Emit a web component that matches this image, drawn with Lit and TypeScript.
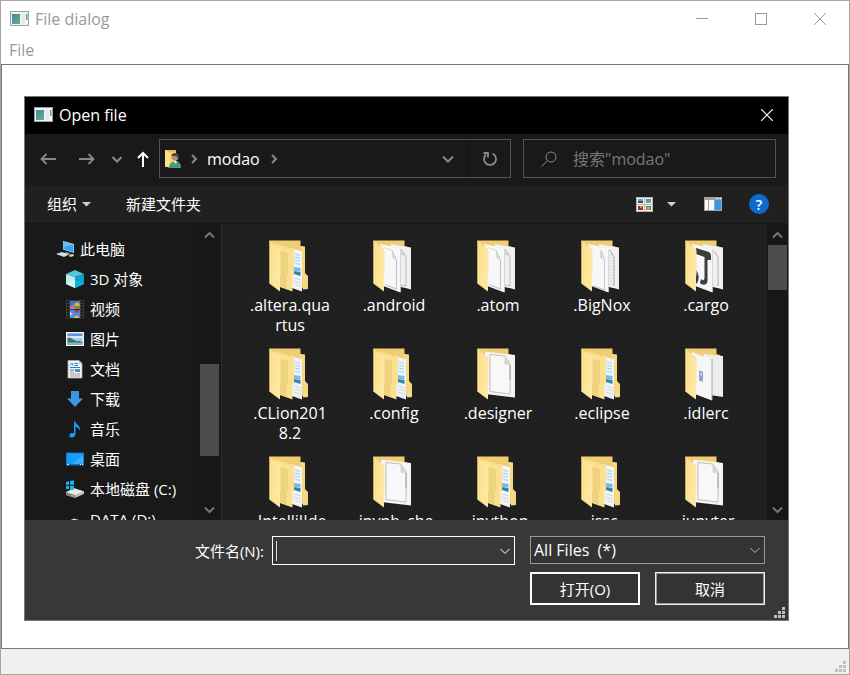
import { LitElement, html, svg, css } from "lit";
import { customElement } from "lit/decorators.js";

const appIcon = html`<svg class="app-icon" width="19" height="16" viewBox="0 0 19 16" aria-hidden="true">
  <defs>
    <linearGradient id="g" x1="0" y1="0" x2="0.6" y2="1">
      <stop offset="0" stop-color="#4a80a8" /><stop offset="1" stop-color="#56b184" />
    </linearGradient>
  </defs>
  <rect x="0.5" y="0.5" width="18" height="14" fill="#f4f4f4" stroke="#9a9fa3" />
  <rect x="2" y="3" width="8" height="10" fill="url(#g)" />
  <rect x="11" y="3" width="4" height="10" fill="#e8e8e8" />
  <rect x="16" y="3" width="1.4" height="6" fill="url(#g)" />
</svg>`;

const chevron = (cls: string) => html`<svg class="chev ${cls}" width="10" height="10" viewBox="0 0 10 10" aria-hidden="true">
  <path d="M0.500 3 L5 7.500 L9.500 3" fill="none" stroke="currentColor" />
</svg>`;

const chevronRight = html`<svg class="chev" width="10" height="10" viewBox="0 0 10 10" aria-hidden="true">
  <path d="M3 1L7 5L3 9" fill="none" stroke="currentColor" />
</svg>`;

const caretDown = html`<svg width="10" height="5" viewBox="0 0 10 5" aria-hidden="true"><path d="M0 0H9L4.5 4.5Z" fill="#d0d0d0" /></svg>`;

const grip = html`<svg class="grip" width="12" height="12" viewBox="0 0 12 12" aria-hidden="true">
  <path fill="currentColor" d="M8 0h3v3h-3zM4 4h3v3h-3zM8 4h3v3h-3zM0 8h3v3h-3zM4 8h3v3h-3zM8 8h3v3h-3z" />
</svg>`;

const placeIcons: Record<string, unknown> = {
  pc: svg`<path d="M7 1 L18 4 V13 L7 9.5Z" fill="#bfe3fb"/><path d="M7.5 2 L17.5 4.8 V12.2 L7.5 9Z" fill="#35a4f4"/><path d="M7.5 2 L17.5 4.8 L7.5 7Z" fill="#63bdf8"/>
    <path d="M10 12 L15 13.5 L11 15 L8 13.5Z" fill="#8d9499"/><path d="M0 14 L6 12 L13 14.6 L8 17Z" fill="#d9dde0"/><path d="M13 15 L17 14 L18 16 L14 17Z" fill="#d9dde0"/>`,
  cube: svg`<path d="M0 4 L9 0 L18 4 L9 7Z" fill="#50c8dc"/><path d="M0 4 L9 7 V18 L0 14Z" fill="#b9edf1"/><path d="M18 4 L9 7 V18 L18 14Z" fill="#12a0d0"/><path d="M0 14 L9 10 V18Z" fill="#d9f7f5"/><path d="M9 18 V10 L18 14Z" fill="#0fb5d8"/>`,
  video: svg`<rect width="18" height="18.500" fill="#3a3a3a"/><path d="M2 1V18M16 1V18" stroke="#111" stroke-width="2" stroke-dasharray="1.500 1.500"/>
    <rect x="4" y="1" width="10" height="8" fill="#4377cc"/><rect x="4" y="10" width="10" height="8" fill="#4f8be0"/>
    <circle cx="11" cy="5" r="2.600" fill="#e0b32c"/><path d="M4 7 L7 5 L9 8 V9 H4Z" fill="#e86a9e"/><rect x="9" y="6" width="5" height="2.500" fill="#5f9c35"/>
    <path d="M8 10H14L11 13Z" fill="#c32c28"/><path d="M8 18C8 15 13 15 13 18Z" fill="#e8c437"/><path d="M4 12L7 14L4 16Z" fill="#b9d7f7"/>`,
  picture: svg`<rect x="0" y="2" width="18" height="14" fill="#f5f5f5"/><rect x="1.500" y="3.500" width="15" height="11" fill="#9cc7ee"/><path d="M1.500 3.500H16.500V6H1.500Z" fill="#5d96d8"/><path d="M1.500 6H16.500V8L9 8.500L1.500 7Z" fill="#d7e9f7"/><path d="M1.500 8C6 7 8 12 13 11L16.500 12V14.500H1.500Z" fill="#3f7364"/><path d="M1.500 12.500H16.500V14.500H1.500Z" fill="#86b6cf"/>`,
  doc: svg`<path d="M2 0.500H13L16 3.500V18H2Z" fill="#f4f4f4" stroke="#a8a8a8" stroke-width="0.800"/><path d="M13 0.500V3.500H16Z" fill="#b9b9b9"/><path d="M4 5.500L6 3L7 5.500M8.500 3.500H12M8.500 5.500H12" stroke="#2484d0" fill="none"/><path d="M4 7.500H14M4 10H8" stroke="#2484d0"/><rect x="9" y="9" width="5" height="3" fill="#4e93b6"/><path d="M4 12H8M4 14H14M4 16H14" stroke="#9a9a9a"/>`,
  download: svg`<path d="M5 1H13V8.500H17L9 17L1 8.500H5Z" fill="#3b96e6"/>`,
  music: svg`<path d="M8 0C9 4 15 5 14 11C13 8 11 7 9.500 7V14C9.500 16.500 7 18 5 17.500C2.500 17 3 13.500 6 13C7 12.800 7.500 13 8 13.300Z" fill="#139df5"/>`,
  desktop: svg`<rect x="0" y="2.500" width="18" height="13" fill="#0a6fbe"/><rect x="0.800" y="3.300" width="16.400" height="10.500" fill="#149cf8"/><path d="M6 13.800L17.200 5V13.800Z" fill="#3bb0fb"/><path d="M1 14.600H3M14 14.600H15M16 14.600H17" stroke="#e7f4ff" stroke-width="1"/>`,
  disk: svg`<path d="M0 12L8 8L18 11.500V14L9 18L0 15Z" fill="#b9bcbe"/><path d="M1 12L8 8.500L18 11.500L9 15Z" fill="#e6e8e9"/><path d="M0 12.500L9 15.300V18L0 15Z" fill="#7d8183"/><path d="M5 15.500L7.500 16.300" stroke="#73e25a"/><path d="M0 3L4 2.200V5.800H0ZM5 2L9 1.200V5.800H5ZM0 6.800H4V10.300L0 9.600ZM5 6.800H9V11L5 10.400Z" fill="#11b7ee" transform="translate(-1 -1)"/>`,
  drive: svg`<path d="M0 12L8 8.500L18 11.500V14L9 18L0 15Z" fill="#d8dadb"/>`,
};

const places: [string, string, boolean][] = [
  ["pc", "此电脑", true],
  ["cube", "3D 对象", false],
  ["video", "视频", false],
  ["picture", "图片", false],
  ["doc", "文档", false],
  ["download", "下载", false],
  ["music", "音乐", false],
  ["desktop", "桌面", false],
  ["disk", "本地磁盘 (C:)", false],
  ["drive", "DATA (D:)", false],
];

type Kind = "media" | "pages" | "lined" | "font" | "single" | "image";

const folders: { lines: string[]; kind: Kind }[] = [
  { lines: [".altera.qua", "rtus"], kind: "media" },
  { lines: [".android"], kind: "pages" },
  { lines: [".atom"], kind: "pages" },
  { lines: [".BigNox"], kind: "lined" },
  { lines: [".cargo"], kind: "font" },
  { lines: [".CLion201", "8.2"], kind: "media" },
  { lines: [".config"], kind: "media" },
  { lines: [".designer"], kind: "single" },
  { lines: [".eclipse"], kind: "media" },
  { lines: [".idlerc"], kind: "image" },
  { lines: [".IntelliJIde", "a2018.2"], kind: "media" },
  { lines: [".ipynb_che", "ckpoints"], kind: "single" },
  { lines: [".ipython"], kind: "media" },
  { lines: [".jssc"], kind: "media" },
  { lines: [".jupyter"], kind: "single" },
];

const backPages = svg`<path d="M19 4L39 7.500V49.500L19 44Z" fill="#eff0f1"/>`;
const frontPage = svg`<path d="M8.500 4L28.500 8.500V52.500L8.500 45Z" fill="#f6f7f8"/><path d="M28.500 9V52" stroke="#c9cbcd" stroke-width="0.700"/>`;

const contents: Record<Kind, unknown> = {
  media: svg`<path d="M32 6L37 6.500V33L40 36V49L35 49.500Z" fill="#f6d982"/>
    <path d="M23 8L34 11.500V51.500L24 48Z" fill="#f1f4f6"/>
    <path d="M26.500 14L32 15.500M26.500 17L32 18.500M26.500 20L32 21.500M26.500 23L32 24.500" stroke="#9cc8e6" stroke-width="0.900"/>
    <path d="M26 27L32.500 28V31.500L26 30.500Z" fill="#6fbdf2"/><path d="M26 31L32.500 32V36L26 34Z" fill="#3f7f9f"/>
    <path d="M26 38L33 40M26 41L33 43M26 44L33 46" stroke="#c6c9cc" stroke-width="0.700"/>
    <path d="M7 3.500L26 9.500V34L24.500 36V51.500L12 47Z" fill="#fbe092"/><path d="M12 11L20 13V35L18.500 36V49L12 47Z" fill="#efd27c"/>`,
  pages: svg`${backPages}${frontPage}<path d="M20 10L24.500 20V49L13 44.500" fill="none" stroke="#a7a7a7" stroke-width="0.700"/><path d="M13 8L20 10" stroke="#ead9ac" stroke-width="0.800"/><path d="M20 10L24.500 20L20 18Z" fill="#d8dadc"/><path d="M29 9L34 17L29 15Z" fill="#d8dadc"/><path d="M29 9L34 17V46L29 45" fill="none" stroke="#b3a895" stroke-width="0.700"/>`,
  lined: svg`${backPages}${frontPage}<path d="M21 10L24.500 20V50L13 45.500" fill="none" stroke="#b0b0b0" stroke-width="0.700"/><path d="M20 10L24.500 19L20 18Z" fill="#d5d7d9"/><path d="M31 14V45" stroke="#d3d5d7" stroke-width="2.500" stroke-dasharray="1 2"/><path d="M30 10L34 17V46" fill="none" stroke="#8f9295" stroke-width="0.800"/>`,
  font: svg`${backPages}${frontPage}<path d="M12 8L25 12Q27 13 27 16V20H23.500V41C23 46 18 45 16 43L17 39C19 41 20.500 41 20.500 37V17L12 14Z" fill="#3d3d3d"/><path d="M12 30C15.500 34 15.500 41 12 44Z" fill="#3d3d3d"/><path d="M30 11L34 17V46" fill="none" stroke="#a4a09a" stroke-width="0.800"/>`,
  single: svg`<path d="M9 3.500L39 7V49.500L9 46Z" fill="#f3f4f5"/><path d="M14 6.500L29 8L34 16V46L14 43.500Z" fill="#f7f8f9" stroke="#bdb29f" stroke-width="0.800"/><path d="M28.500 8V16.500L34 17Z" fill="#d3d5d7"/><path d="M34 17V32" stroke="#909396" stroke-width="0.800"/>`,
  image: svg`<path d="M20 6L39 8V49L20 46Z" fill="#ecedef"/><path d="M8 4L28 11.500V52.500L8 45Z" fill="#f5f6f7"/><path d="M28 11V52" stroke="#a8aaac"/><path d="M15 22.500L19 23.500V34L15 32.500Z" fill="#8fa5d0"/><path d="M16 24L18 24.500V28H16Z" fill="#b6c7e4"/>`,
};

const folderIcon = (kind: Kind) => html`<svg width="44" height="54" viewBox="0 -1 44 54" aria-hidden="true">
  <defs><linearGradient id="f" x1="0" y1="0" x2="1" y2="0.400"><stop offset="0" stop-color="#fcdf8a" /><stop offset="1" stop-color="#ffe8a3" /></linearGradient></defs>
  <path d="M1.300 0.500H32.500V6L36 7V48L12 45Z" fill="#efcd70" />
  ${contents[kind]}
  <path d="M1.300 0.500L12.500 10V35L12 36.500V51.500L1.300 43.500Z" fill="url(#f)" />
</svg>`;

@customElement("scroll-strip")
class ScrollStrip extends LitElement {
  static properties = { before: { type: Number }, size: { type: Number }, after: { type: Number } };
  declare before: number;
  declare size: number;
  declare after: number;

  static styles = css`
    :host { display: flex; flex-direction: column; flex: none; width: 21px; background: #171717; }
    button { flex: none; height: 21px; padding: 0; border: 0; background: none; color: #757575; line-height: 0; }
    .up svg { transform: rotate(180deg); }
    .thumb { background: #4d4d4d; margin: 0 1px; }
  `;

  render() {
    const arrow = html`<svg width="11" height="10" viewBox="0 0 11 10"><path d="M1 2.500L5.500 7L10 2.500" fill="none" stroke="currentColor" stroke-width="2" /></svg>`;
    return html`
      <button class="up" aria-label="向上滚动">${arrow}</button>
      <div style="flex: ${this.before}"></div>
      <div class="thumb" style="flex: ${this.size}"></div>
      <div style="flex: ${this.after}"></div>
      <button aria-label="向下滚动">${arrow}</button>
    `;
  }
}

@customElement("app-root")
class AppRoot extends LitElement {
  static styles = css`
    :host {
      display: flex; flex-direction: column; box-sizing: border-box; height: 100vh; min-height: 480px;
      border: 1px solid #a5a5a5; background: #fff;
      font: 15px/20px "Open Sans", "Noto Sans CJK SC", sans-serif; color: #999;
    }
    * { box-sizing: border-box; }
    button, input, select { font: inherit; color: inherit; margin: 0; padding: 0; border: 0; border-radius: 0; background: none; outline: none; }
    svg { flex: none; display: block; }
    h1, h2 { font: inherit; font-size: 16px; margin: 0; flex: 1; }
    ul { list-style: none; margin: 0; padding: 0; }
    .window-title { display: flex; align-items: center; height: 36px; padding-left: 9px; flex: none; }
    .window-title h1 { margin-left: 6px; }
    .window-title button { width: 59px; height: 36px; display: grid; place-items: center; }
    .menu { height: 27px; padding: 3px 0 0 8px; flex: none; }
    .menu button { font-size: 16px; }
    .client { flex: 1; min-height: 0; display: flex; padding: 31px 59px 27px 22px; border: 1px solid #777; }
    .status { flex: none; height: 25px; background: #f0f0f0; display: flex; align-items: flex-end; justify-content: flex-end; padding: 0 2px 1px; color: #bfbfbf; }

    .dialog { flex: 1; min-width: 0; display: flex; flex-direction: column; border: 1px solid #777; background: #191919; color: #fff; }
    .dialog-title { flex: none; height: 37px; display: flex; align-items: center; gap: 6px; padding: 0 0 2px 9px; background: #000; }
    .dialog-title button { width: 42px; height: 35px; display: grid; place-items: center; }
    .nav { flex: none; display: flex; align-items: center; padding: 5px 12px 7px 14px; color: #8a8a8a; font-size: 16px; }
    .nav > button { display: grid; place-items: center; height: 39px; }
    .back, .forward { width: 18px; }
    .forward { margin-left: 21px; }
    .recent { width: 14px; margin-left: 14px; }
    .up { width: 18px; margin: 0 7px 0 10px; color: #fff; }
    .address { flex: 1; min-width: 0; height: 39px; display: flex; align-items: center; border: 1px solid #535353; padding-left: 4px; }
    .address .crumb { color: #fff; margin: 0 8px; }
    .address .chev { margin-left: 1px; }
    .address .root { margin-left: 6px; }
    .address .drop { margin-left: auto; width: 40px; height: 37px; display: grid; place-items: center; }
    .address .refresh { width: 42px; height: 37px; display: grid; place-items: center; border-left: 1px solid #121212; }
    .chev path { stroke-width: 2; }
    .chev.thin path { stroke-width: 1; }
    .search { flex: 0 1 253px; height: 39px; margin-left: 12px; display: flex; align-items: center; gap: 16px; border: 1px solid #535353; padding-left: 17px; }
    .search input { flex: 1; min-width: 0; }
    .search input::placeholder { color: #777; opacity: 1; }
    .tools { flex: none; height: 39px; display: flex; align-items: center; padding: 0 19px 0 22px; background: #202020; border-bottom: 1px solid #171717; }
    .tools button { display: flex; align-items: center; }
    .organize { gap: 5px; }
    .new-folder { margin-left: 34px; margin-right: auto; }
    .view { gap: 14px; }
    .preview { margin: 0 27px; }
    .tools .help { width: 20px; height: 20px; border-radius: 50%; background: #0b6ccd; justify-content: center; font-weight: 600; }

    .body { flex: 1; min-height: 0; display: flex; overflow: hidden; }
    .places { width: 174px; flex: none; overflow: hidden; padding-top: 10px; }
    .places button { display: flex; align-items: center; gap: 5px; height: 30px; width: 100%; padding-left: 41px; white-space: nowrap; }
    .places .root button { padding-left: 31px; }
    .files { flex: 1; min-width: 0; overflow: hidden; margin-left: 1px; padding: 15px 9px 0 16px; border-left: 1px solid #2a2a2a; background: #202020; font-size: 16px;
      display: grid; grid-template-columns: repeat(auto-fill, 104px); grid-auto-rows: 108px; }
    .files button { display: flex; flex-direction: column; align-items: center; width: 104px; gap: 2px; }

    .footer { flex: none; height: 100px; background: #383838; padding: 16px 23px 0 0; position: relative;
      display: grid; grid-template-columns: 1fr 243px 235px; grid-template-rows: 29px 33px; gap: 7px 15px; }
    .footer label { justify-self: end; align-self: center; margin-right: -7px; }
    .name { display: flex; align-items: center; border: 1px solid #fff; padding: 0 4px 0 3px; }
    .name input { flex: 1; min-width: 0; height: 26px; }
    .caret { width: 1px; height: 20px; background: #ddd; }
    .name button { width: 10px; }
    .type { position: relative; display: flex; height: 28px; color: #fff; }
    .type select { appearance: none; flex: 1; border: 1px solid #999; background: #333; padding: 0 24px 0 3px; font-size: 16px; }
    .type svg { position: absolute; right: 5px; top: 9px; color: #bbb; pointer-events: none; }
    .actions { grid-column: 3; display: grid; grid-template-columns: 1fr 1fr; gap: 15px; }
    .actions button { background: #333; border: 1px solid #eee; outline: 1px solid #999; outline-offset: -2px; }
    .actions .open { border: 2px solid #fff; outline: none; }
    .footer .grip { position: absolute; right: 2px; bottom: 1px; color: #bfbfbf; }
  `;

  render() {
    return html`
      <header class="window-title">
        ${appIcon}
        <h1>File dialog</h1>
        <button aria-label="最小化"><svg width="12" height="12"><path d="M0 5.500H12" stroke="#999" /></svg></button>
        <button aria-label="最大化"><svg width="12" height="12"><rect x="0.500" y="0.500" width="11" height="11" fill="none" stroke="#999" /></svg></button>
        <button aria-label="关闭"><svg width="12" height="12"><path d="M0 0L12 12M12 0L0 12" stroke="#999" /></svg></button>
      </header>
      <nav class="menu"><button>File</button></nav>
      <main class="client">${this.dialog()}</main>
      <footer class="status">${grip}</footer>
    `;
  }

  private dialog() {
    return html`<section class="dialog" role="dialog" aria-label="Open file">
      <header class="dialog-title">
        ${appIcon}
        <h2>Open file</h2>
        <button aria-label="关闭"><svg width="12" height="12"><path d="M0 0L12 12M12 0L0 12" stroke="#fff" stroke-width="1.200" /></svg></button>
      </header>
      <div class="nav">
        <button class="back" aria-label="后退"><svg width="16" height="12"><path d="M16 6H1.500M6.500 1L1.500 6L6.500 11" fill="none" stroke="currentColor" stroke-width="1.800" /></svg></button>
        <button class="forward" aria-label="前进"><svg width="16" height="12"><path d="M0 6H14.500M9.500 1L14.500 6L9.500 11" fill="none" stroke="currentColor" stroke-width="1.800" /></svg></button>
        <button class="recent" aria-label="最近位置">${chevron("")}</button>
        <button class="up" aria-label="上移"><svg width="12" height="16"><path d="M6 16V2M1 7L6 2L11 7" fill="none" stroke="currentColor" stroke-width="2" /></svg></button>
        <div class="address">
          <svg width="18" height="20" viewBox="0 0 18 20" aria-hidden="true">
            <path d="M1 1H12V18H1Z" fill="#e3b954" /><path d="M1 1L6 4V19L1 17Z" fill="#ffe08a" /><path d="M6 3H12V14H6Z" fill="#f5d272" />
            <path d="M5 19C5 14 9 12 12 12C15 12 17 15 17 19Z" fill="#4d9a78" /><path d="M9 12L12 15L13 12Z" fill="#d9e8f2" />
            <circle cx="11" cy="8" r="3.500" fill="#b98f70" /><path d="M7.500 7C7.500 3 15 3 15 8L14 10L12.500 7Z" fill="#454545" />
          </svg>
          <span class="root">${chevronRight}</span>
          <button class="crumb">modao</button>
          ${chevronRight}
          <button class="drop" aria-label="以前的位置"><svg width="12" height="10"><path d="M1 2.500L6 7.500L11 2.500" fill="none" stroke="currentColor" stroke-width="2" /></svg></button>
          <button class="refresh" aria-label="刷新"><svg width="16" height="16" viewBox="0 0 16 16"><path d="M10.500 2.500A6 6 0 1 1 4 3.500M1.500 2H6V6.500" fill="none" stroke="currentColor" stroke-width="1.800" /></svg></button>
        </div>
        <label class="search">
          <svg width="16" height="16" viewBox="0 0 16 16" aria-hidden="true"><circle cx="10" cy="6" r="5" fill="none" stroke="currentColor" /><path d="M6.500 9.500L0.500 15.500" stroke="currentColor" /></svg>
          <input type="text" placeholder='搜索"modao"' aria-label="搜索" />
        </label>
      </div>
      <div class="tools">
        <button class="organize">组织 ${caretDown}</button>
        <button class="new-folder">新建文件夹</button>
        <button class="view" aria-label="更改视图">
          <svg width="17" height="15" viewBox="0 0 17 15">
            <rect width="17" height="15" fill="#f2f2f2" /><path d="M0.500 0.500H16.500V14.500H0.500ZM8.500 0V15M0 7.500H17" fill="none" stroke="#b5b5b5" />
            <rect x="2" y="2" width="5" height="2" fill="#5ea3dc" /><rect x="2" y="4" width="5" height="2" fill="#28566e" />
            <rect x="10" y="2" width="5" height="2" fill="#4b93d0" /><rect x="10" y="4" width="5" height="2" fill="#91a35e" />
            <rect x="2" y="9" width="5" height="4" fill="#a32b18" /><rect x="4" y="9" width="2" height="2" fill="#e68b28" />
            <rect x="10" y="9" width="5" height="4" fill="#347ab8" /><rect x="11" y="10" width="3" height="3" fill="#e2a126" />
          </svg>
          ${caretDown}
        </button>
        <button class="preview" aria-label="预览窗格">
          <svg width="18" height="14" viewBox="0 0 18 14">
            <rect width="18" height="14" fill="#a0a4a8" /><rect x="1" y="3" width="3" height="10" fill="#fafafa" /><rect x="5" y="3" width="5" height="10" fill="#fafafa" />
            <rect x="11" y="3" width="6" height="10" fill="#3a9be4" /><path d="M12 1.500H13M14 1.500H15M16 1.500H17" stroke="#fff" />
          </svg>
        </button>
        <button class="help" aria-label="帮助">?</button>
      </div>
      <div class="body">
        <ul class="places">
          ${places.map(([icon, name, root]) => html`<li class=${root ? "root" : ""}>
            <button><svg width="19" height="19" viewBox="0 0 19 19" aria-hidden="true">${placeIcons[icon]}</svg>${name}</button>
          </li>`)}
        </ul>
        <scroll-strip before="119" size="92" after="43"></scroll-strip>
        <div class="files">
          ${folders.map((f) => html`<button>${folderIcon(f.kind)}<span>${f.lines.map((t, i) => (i ? html`<br />${t}` : t))}</span></button>`)}
        </div>
        <scroll-strip before="0" size="45" after="209"></scroll-strip>
      </div>
      <div class="footer">
        <label for="name">文件名(N):</label>
        <div class="name"><span class="caret"></span><input id="name" type="text" /><button aria-label="历史记录">${chevron("thin")}</button></div>
        <div class="type"><select aria-label="文件类型"><option>All Files\u00a0 (*)</option></select>${chevron("thin")}</div>
        <div class="actions"><button class="open">打开(O)</button><button>取消</button></div>
        ${grip}
      </div>
    </section>`;
  }
}
